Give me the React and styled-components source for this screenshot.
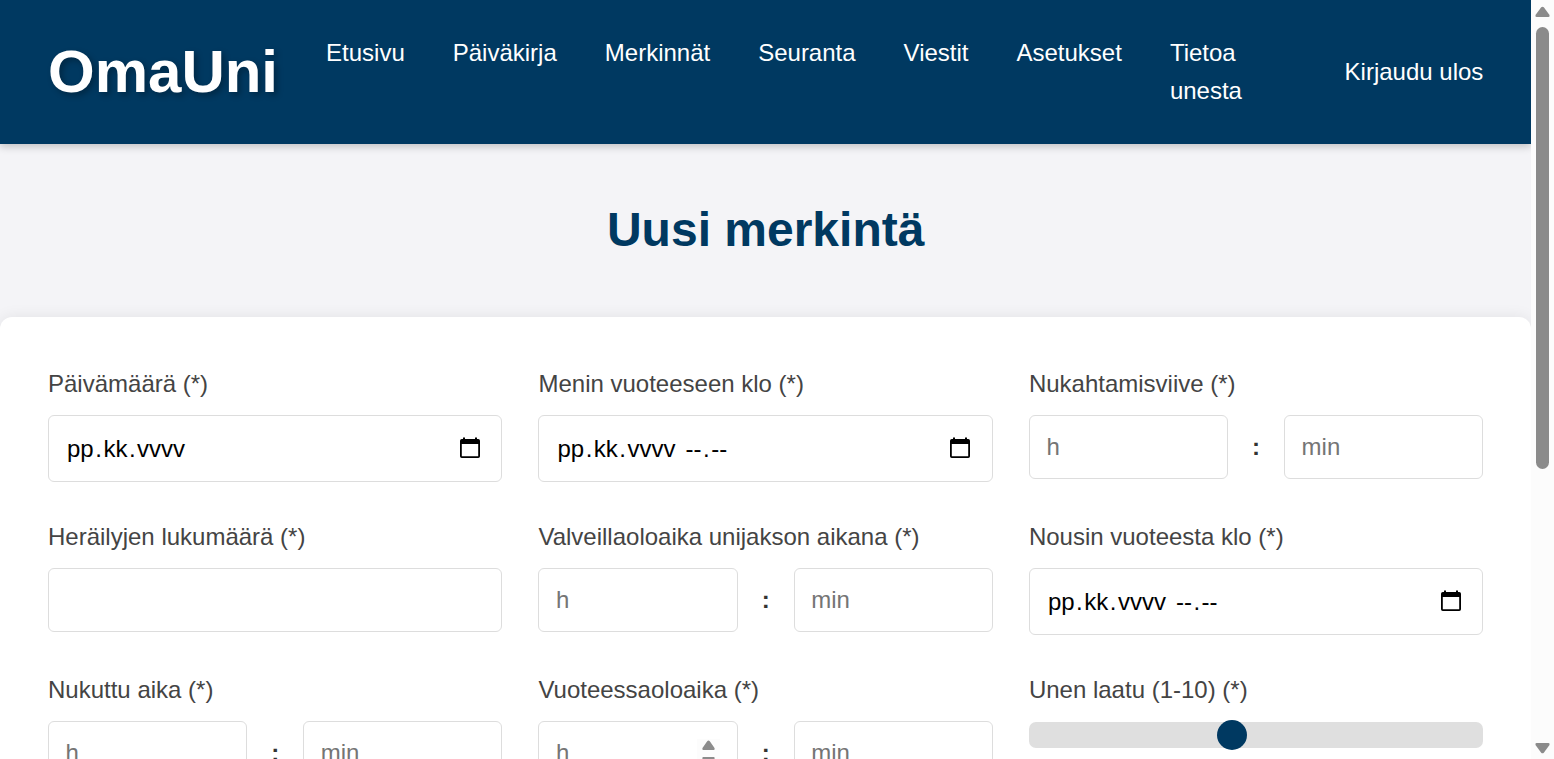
import React from "react";
import styled, { createGlobalStyle } from "styled-components";

const GlobalStyle = createGlobalStyle`
  * { box-sizing: border-box; }
  body {
    margin: 0;
    overflow: hidden;
    font-family: "Liberation Sans", Arial, sans-serif;
    font-size: 24px;
    line-height: 1.6;
    color: #333;
    background: #f4f4f7;
  }
`;

const Window = styled.div`
  display: flex;
  height: 759px;
  overflow: hidden;
`;

const Page = styled.div`
  flex: 1;
  min-width: 0;
  overflow: hidden;
`;

const Header = styled.header`
  display: flex;
  align-items: center;
  height: 144px;
  padding: 0 48px;
  background: #003961;
  color: #fff;
  box-shadow: 0 3px 7.5px rgba(0, 0, 0, 0.2);
`;

const Brand = styled.h1`
  margin: 0 48px 0 0;
  padding-bottom: 1px;
  font-size: 60px;
  line-height: 95px;
  font-weight: 700;
  text-shadow: 3px 3px 6px rgba(0, 0, 0, 0.3);
`;

const Nav = styled.nav`
  display: flex;
  align-items: flex-start;
  gap: 48px;
`;

const NavLink = styled.a`
  color: #fff;
  width: ${(p) => (p.$narrow ? "90px" : "auto")};
  white-space: ${(p) => (p.$narrow ? "normal" : "nowrap")};
`;

const Logout = styled.a`
  margin-left: auto;
  color: #fff;
  white-space: nowrap;
`;

const Title = styled.h2`
  margin: 0;
  height: 173px;
  font-size: 48px;
  line-height: 171px;
  color: #003961;
  text-align: center;
`;

const FormCard = styled.form`
  display: grid;
  grid-template-columns: repeat(3, 1fr);
  grid-auto-rows: 117px;
  gap: 36px;
  height: 900px;
  padding: 48px;
  background: #fff;
  border-radius: 12px;
  box-shadow: 0 0 15px rgba(0, 0, 0, 0.08);
`;

const Field = styled.div`
  display: flex;
  flex-direction: column;
  min-width: 0;
`;

const Label = styled.label`
  height: 38px;
  line-height: 38px;
  margin-bottom: 12px;
  color: #444;
  white-space: nowrap;
`;

const DateBox = styled.div`
  display: flex;
  align-items: center;
  height: 67px;
  padding: 2px 20.5px 0 16.5px;
  border: 1px solid #ddd;
  border-radius: 6px;
  color: #000;
`;

const DatePart = styled.span`
  padding: 0 1.5px;
`;

const DateGap = styled.span`
  width: 7px;
`;

const CalendarIcon = styled.svg`
  width: 22px;
  height: 22px;
  margin: -4px 0 0 auto;
`;

const TextInput = styled.input`
  width: 100%;
  height: 64px;
  padding: 0 16.5px;
  border: 1px solid #ddd;
  border-radius: 6px;
  background: #fff;
  font: inherit;
  outline: none;
  &::placeholder { color: #757575; opacity: 1; }
`;

const TimeRow = styled.div`
  display: grid;
  grid-template-columns: 1fr 8px 1fr;
  column-gap: 24px;
  align-items: center;
`;

const InputWrap = styled.div`
  position: relative;
  display: flex;
`;

const Colon = styled.span`
  font-weight: 700;
`;

const Spinner = styled.svg`
  position: absolute;
  right: 18px;
  top: 18px;
  width: 23px;
  height: 30px;
  background: #fcfcfc;
`;

const Track = styled.div`
  display: flex;
  align-items: center;
  height: 26px;
  margin-top: 1px;
  padding-left: 188px;
  border-radius: 7px;
  background: #dfdfdf;
`;

const Thumb = styled.div`
  width: 30px;
  height: 30px;
  flex: none;
  border-radius: 50%;
  background: #003961;
`;

const Scrollbar = styled.div`
  display: flex;
  flex-direction: column;
  align-items: center;
  width: 22.67px;
  padding: 6px 0 5px;
  background: #fcfcfc;
`;

const Arrow = styled.svg`
  display: block;
  width: 15px;
  height: 12px;
  fill: #8b8b8b;
`;

const ScrollThumb = styled.div`
  width: 13px;
  height: 442px;
  margin: 9px 0 auto;
  border-radius: 7px;
  background: #8b8b8b;
`;

const DateInput = ({ time }) => (
  <DateBox>
    <DatePart>pp</DatePart>.<DatePart>kk</DatePart>.<DatePart>vvvv</DatePart>
    {time && (
      <>
        <DateGap />
        <DatePart>--</DatePart>.<DatePart>--</DatePart>
      </>
    )}
    <CalendarIcon viewBox="0 0 22 22">
      <path
        fillRule="evenodd"
        d="M4 .5h2v1.500h10V.5h2v1.500h1.200q1.800 0 1.800 1.800v15.400q0 1.800-1.800 1.800H2.800Q1 21 1 19.200V3.800Q1 2 2.800 2H4zM2.800 7v12.200h16.400V7z"
      />
    </CalendarIcon>
  </DateBox>
);

const TimeInput = ({ spinner }) => (
  <TimeRow>
    <InputWrap>
      <TextInput placeholder="h" />
      {spinner && (
        <Spinner viewBox="0 0 23 30">
          <path d="M10.200 2.300Q11.500 .8 12.800 2.300L17.500 9Q18 11 16.700 11H6.300Q5 11 5.500 9zM6.300 18h10.400q1.300 0 .8 2l-4.700 6.700q-1.300 1.500-2.600 0L5.500 20q-.5-2 .8-2z" fill="#8b8b8b" />
        </Spinner>
      )}
    </InputWrap>
    <Colon>:</Colon>
    <TextInput placeholder="min" />
  </TimeRow>
);

const links = ["Etusivu", "Päiväkirja", "Merkinnät", "Seuranta", "Viestit", "Asetukset"];

const fields = [
  ["Päivämäärä (*)", <DateInput />],
  ["Menin vuoteeseen klo (*)", <DateInput time />],
  ["Nukahtamisviive (*)", <TimeInput />],
  ["Heräilyjen lukumäärä (*)", <TextInput />],
  ["Valveillaoloaika unijakson aikana (*)", <TimeInput />],
  ["Nousin vuoteesta klo (*)", <DateInput time />],
  ["Nukuttu aika (*)", <TimeInput />],
  ["Vuoteessaoloaika (*)", <TimeInput spinner />],
  ["Unen laatu (1-10) (*)", <Track><Thumb /></Track>],
];

export default function App() {
  return (
    <Window>
      <GlobalStyle />
      <Page>
        <Header>
          <Brand>OmaUni</Brand>
          <Nav>
            {links.map((text) => (
              <NavLink key={text}>{text}</NavLink>
            ))}
            <NavLink $narrow>Tietoa unesta</NavLink>
          </Nav>
          <Logout>Kirjaudu ulos</Logout>
        </Header>
        <Title>Uusi merkintä</Title>
        <FormCard>
          {fields.map(([label, control]) => (
            <Field key={label}>
              <Label>{label}</Label>
              {control}
            </Field>
          ))}
        </FormCard>
      </Page>
      <Scrollbar>
        <Arrow viewBox="0 0 15 12">
          <path d="M6.200 1.300Q7.500 0 8.800 1.300L14.500 9Q15 11 13.500 11h-12Q0 11 .5 9z" />
        </Arrow>
        <ScrollThumb />
        <Arrow viewBox="0 0 15 12">
          <path d="M6.200 10.700Q7.500 12 8.800 10.700L14.500 3Q15 1 13.500 1h-12Q0 1 .5 3z" />
        </Arrow>
      </Scrollbar>
    </Window>
  );
}
